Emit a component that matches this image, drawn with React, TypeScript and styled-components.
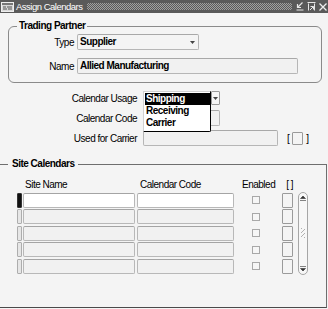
import styled, { createGlobalStyle } from "styled-components";

const GlobalStyle = createGlobalStyle`
  html, body {
    margin: 0;
    padding: 0;
    background: #f4f4f4;
  }
  body {
    font-family: "Liberation Sans", Arial, sans-serif;
    font-size: 10px;
    letter-spacing: -0.5px;
    color: #000;
  }
`;

const Window = styled.div`
  width: 328px;
  height: 309px;
  background: #f4f4f4;
  display: flex;
  flex-direction: column;
  overflow: hidden;
`;

const TitleBar = styled.div`
  height: 13px;
  flex: none;
  background: #5a5a5a;
  display: flex;
  align-items: center;
  padding: 0 1px;
  color: #fff;
`;

const TitleText = styled.span`
  font-size: 9.5px;
  letter-spacing: -0.5px;
  line-height: 13px;
  margin-left: 2px;
  white-space: nowrap;
`;

const TitlePattern = styled.div`
  flex: 1;
  height: 7px;
  margin: 0 4px 0 5px;
  background-image: repeating-conic-gradient(#a0a0a0 0 25%, #5a5a5a 0 50%);
  background-size: 2px 2px;
`;

const TitleButtons = styled.div`
  display: flex;
  gap: 3px;
  align-items: center;
`;

const Group = styled.fieldset`
  box-sizing: border-box;
  min-width: 0;
  margin: 7px 0 0 8px;
  width: 314px;
  padding: 2px 0 8px 0;
  border: 1px solid #8a8a8a;
  border-radius: 6px;
`;

const Legend = styled.legend`
  font-weight: bold;
  line-height: 12px;
  padding: 0 2px;
  margin-left: 8px;
`;

const FormGrid = styled.div<{ $label: number; $gap: number; $rowGap: number }>`
  display: grid;
  grid-template-columns: ${(p) => p.$label}px auto;
  grid-auto-rows: 16px;
  column-gap: ${(p) => p.$gap}px;
  row-gap: ${(p) => p.$rowGap}px;
  align-items: center;
  justify-items: start;
`;

const Label = styled.span`
  justify-self: end;
  white-space: nowrap;
  line-height: 13px;
`;

const Field = styled.div<{ $w: number; $white?: boolean }>`
  box-sizing: border-box;
  width: ${(p) => p.$w}px;
  height: 16px;
  border: 1px solid #b6b6b6;
  border-top-color: #a8a8a8;
  border-radius: 2px;
  background: ${(p) => (p.$white ? "#ffffff" : "#f1f1f1")};
  padding: 0 2px;
  font-weight: bold;
  line-height: 14px;
  white-space: nowrap;
  overflow: hidden;
`;

const SelectBox = styled(Field)`
  display: flex;
  justify-content: space-between;
  align-items: center;
  padding-right: 3px;
  background: #f4f4f4;
`;

const Middle = styled.div`
  margin-top: 7px;
`;

const Poplist = styled.div`
  position: relative;
  width: 77px;
  height: 14px;
  display: flex;
  justify-content: flex-end;
`;

const ArrowButton = styled.div`
  box-sizing: border-box;
  width: 9px;
  height: 14px;
  border: 1px solid #9a9a9a;
  border-radius: 1px;
  background: #f6f6f6;
  display: flex;
  align-items: center;
  justify-content: center;
`;

const DropList = styled.ul`
  position: absolute;
  left: 0;
  top: 0;
  z-index: 2;
  box-sizing: border-box;
  width: 68px;
  margin: 0;
  padding: 1px 0 2px 1px;
  list-style: none;
  background: #fff;
  border: 1px solid #d0d0d0;
  border-right-color: #000;
  border-bottom-color: #000;
  border-radius: 0 0 2px 0;
`;

const DropItem = styled.li<{ $active?: boolean }>`
  height: 12px;
  line-height: 12px;
  padding-left: 1px;
  font-weight: bold;
  background: ${(p) => (p.$active ? "#000" : "transparent")};
  color: ${(p) => (p.$active ? "#fff" : "#000")};
`;

const CarrierRow = styled.div`
  display: flex;
  align-items: center;
`;

const Bracket = styled.span<{ $lead?: number }>`
  line-height: 13px;
  margin: 0 3px 0 ${(p) => p.$lead ?? 3}px;
`;

const SmallBox = styled.div<{ $h: number }>`
  box-sizing: border-box;
  width: 11px;
  height: ${(p) => p.$h}px;
  border: 1px solid #9a9a9a;
  border-radius: 1px;
  background: #f4f4f4;
`;

const SiteGroup = styled.fieldset`
  box-sizing: border-box;
  min-width: 0;
  flex: 1;
  margin: 12px 0 1px 0;
  width: 327px;
  padding: 9px 0 0 17px;
  border: 1px solid #6e6e6e;
  border-left: none;
  border-bottom-color: #4a4a4a;
`;

const SiteLegend = styled.legend`
  font-weight: bold;
  line-height: 12px;
  padding: 0 4px;
  margin-left: -9px;
`;

const Table = styled.div`
  display: grid;
  grid-template-columns: 6px 114px 97px 43px 16px 15px;
  grid-template-rows: 12px repeat(5, 15px);
  row-gap: 1.5px;
  align-items: center;
`;

const ColHead = styled.span<{ $pad?: number; $end?: boolean }>`
  line-height: 12px;
  color: #000;
  padding-left: ${(p) => p.$pad ?? 0}px;
  justify-self: ${(p) => (p.$end ? "end" : "start")};
  white-space: nowrap;
`;

const RowMark = styled.div<{ $current?: boolean }>`
  box-sizing: border-box;
  width: 5px;
  height: 15px;
  border: 1px solid ${(p) => (p.$current ? "#333" : "#adadad")};
  border-radius: 1px;
  background: ${(p) => (p.$current ? "#111" : "#e6e6e6")};
`;

const Cell = styled.div<{ $w: number; $white?: boolean }>`
  box-sizing: border-box;
  width: ${(p) => p.$w}px;
  height: 15px;
  border: 1px solid #b8b8b8;
  border-top-color: #a4a4a4;
  border-radius: 2px;
  background: ${(p) => (p.$white ? "#ffffff" : "#f1f1f1")};
`;

const Check = styled.div`
  justify-self: center;
  box-sizing: border-box;
  width: 8px;
  height: 8px;
  border: 1px solid #a8a8a8;
  background: #f6f6f6;
`;

const BoxCell = styled(SmallBox)`
  justify-self: end;
`;

const Scrollbar = styled.div`
  grid-column: 6;
  grid-row: 2 / span 5;
  justify-self: end;
  align-self: stretch;
  box-sizing: border-box;
  width: 10px;
  margin: -1px 0;
  border: 1px solid #a6a6a6;
  border-radius: 5px;
  background: #f7f7f7;
  display: flex;
  flex-direction: column;
  align-items: center;
  justify-content: space-between;
  padding: 3px 0;
`;

const Grip = styled.div`
  width: 4px;
  height: 10px;
  background-image: repeating-linear-gradient(135deg, #b0b0b0 0 1px, transparent 1px 3px);
`;

function WindowIcon() {
  return (
    <svg width="13" height="10" viewBox="0 0 13 10">
      <rect x="0.5" y="0.5" width="12" height="9" fill="#d8d8d8" stroke="#eee" />
      <rect x="1" y="1" width="11" height="2" fill="#777" />
      <path d="M2 5h3M6 5h5M2 7h4M7 7h4" stroke="#555" strokeWidth="1" />
    </svg>
  );
}

function MinimizeIcon() {
  return (
    <svg width="8" height="9" viewBox="0 0 8 9">
      <path d="M6.5 0.5L2 5M1.5 2v3.5H5M0.5 8h7" stroke="#e6e6e6" strokeWidth="1.2" fill="none" />
    </svg>
  );
}

function MaximizeIcon() {
  return (
    <svg width="9" height="9" viewBox="0 0 9 9">
      <path d="M0.5 0.5h8M1.5 1.5v7M7.5 1.5v7M3 8L6.5 4.5M3.5 4.5h3v3" stroke="#e6e6e6" strokeWidth="1" fill="none" />
    </svg>
  );
}

function CloseIcon() {
  return (
    <svg width="8" height="8" viewBox="0 0 8 8">
      <path d="M0.5 0.5l7 7M7.5 0.5l-7 7" stroke="#eee" strokeWidth="1.3" />
    </svg>
  );
}

function DownTriangle() {
  return (
    <svg width="5" height="3" viewBox="0 0 5 3">
      <path d="M0 0h5L2.5 3z" fill="#444" />
    </svg>
  );
}

function ScrollArrow({ up }: { up?: boolean }) {
  return (
    <svg width="6" height="5" viewBox="0 0 6 5">
      {up ? (
        <path d="M0.5 2.5h5L3 0zM0 4.5h6" fill="#333" stroke="#333" strokeWidth="0.6" />
      ) : (
        <path d="M0.5 2.5h5L3 5zM0 0.5h6" fill="#333" stroke="#333" strokeWidth="0.6" />
      )}
    </svg>
  );
}

const rows = [0, 1, 2, 3, 4];

export default function App() {
  return (
    <>
      <GlobalStyle />
      <Window>
        <TitleBar>
          <WindowIcon />
          <TitleText>Assign Calendars</TitleText>
          <TitlePattern />
          <TitleButtons>
            <MinimizeIcon />
            <MaximizeIcon />
            <CloseIcon />
          </TitleButtons>
        </TitleBar>

        <Group>
          <Legend>Trading Partner</Legend>
          <FormGrid $label={65} $gap={3} $rowGap={8}>
            <Label>Type</Label>
            <SelectBox $w={122}>
              <span>Supplier</span>
              <DownTriangle />
            </SelectBox>
            <Label>Name</Label>
            <Field $w={221}>Allied Manufacturing</Field>
          </FormGrid>
        </Group>

        <Middle>
          <FormGrid $label={137} $gap={6} $rowGap={4}>
            <Label>Calendar Usage</Label>
            <Poplist>
              <ArrowButton>
                <DownTriangle />
              </ArrowButton>
              <DropList>
                <DropItem $active>Shipping</DropItem>
                <DropItem>Receiving</DropItem>
                <DropItem>Carrier</DropItem>
              </DropList>
            </Poplist>
            <Label>Calendar Code</Label>
            <Field $w={77} />
            <Label>Used for Carrier</Label>
            <CarrierRow>
              <Field $w={135} />
              <Bracket $lead={9}>[</Bracket>
              <SmallBox $h={13} />
              <Bracket>]</Bracket>
            </CarrierRow>
          </FormGrid>
        </Middle>

        <SiteGroup>
          <SiteLegend>Site Calendars</SiteLegend>
          <Table>
            <span />
            <ColHead $pad={2}>Site Name</ColHead>
            <ColHead $pad={3}>Calendar Code</ColHead>
            <ColHead $pad={8}>Enabled</ColHead>
            <ColHead $end>[&nbsp;]</ColHead>
            <span />
            {rows.map((i) => (
              <Row key={i} first={i === 0} />
            ))}
            <Scrollbar>
              <ScrollArrow up />
              <Grip />
              <ScrollArrow />
            </Scrollbar>
          </Table>
        </SiteGroup>
      </Window>
    </>
  );
}

function Row({ first }: { first: boolean }) {
  return (
    <>
      <RowMark $current={first} />
      <Cell $w={112} $white={first} />
      <Cell $w={97} $white={first} />
      <Check />
      <BoxCell $h={15} />
    </>
  );
}
